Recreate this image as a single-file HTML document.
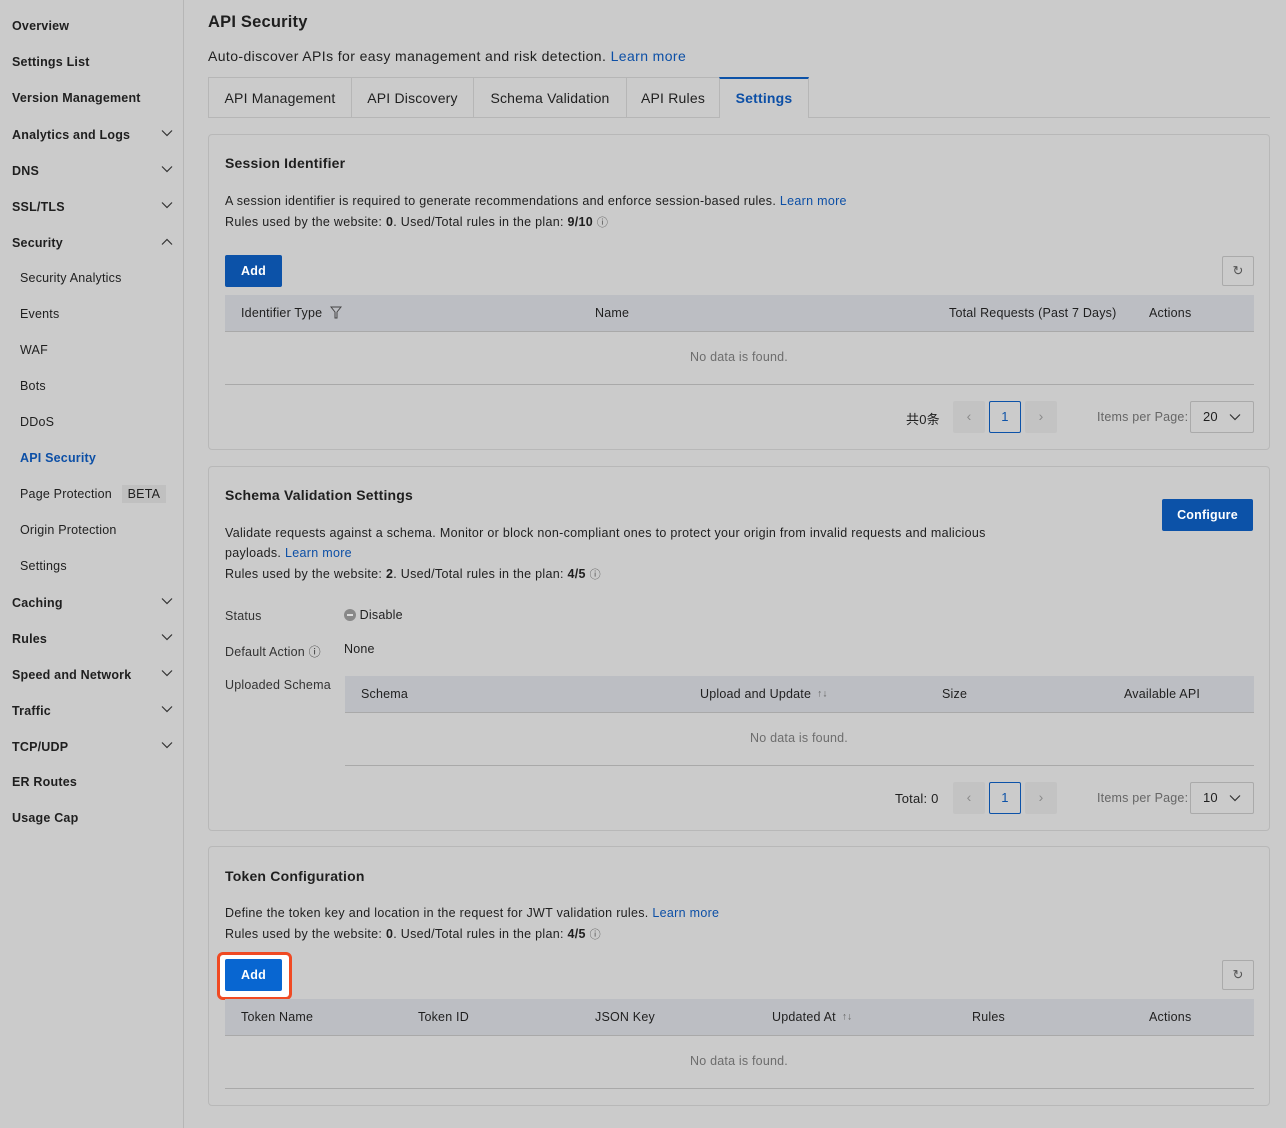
<!DOCTYPE html>
<html><head><meta charset="utf-8"><style>
*{box-sizing:border-box;margin:0;padding:0}
body{width:1286px;height:1128px;background:#cbcbcb;font-family:"Liberation Sans","Noto Sans CJK SC",sans-serif;color:#1f1f1f;position:relative;overflow:hidden;font-size:12.5px;letter-spacing:0.2px}
.a{position:absolute;white-space:nowrap}
.side{position:absolute;left:0;top:0;width:184px;height:1128px;border-right:1px solid #b6b6b6}
.nb{position:absolute;left:12px;font-weight:bold;font-size:12.5px;transform:translateY(-50%);margin-top:1px}
.ns{position:absolute;left:20px;font-size:12.5px;transform:translateY(-50%);margin-top:1px}
.chev{position:absolute;left:161px;width:12px;height:8px;transform:translateY(-50%)}
.card{position:absolute;left:208px;width:1062px;border:1px solid #b8b8b8;border-radius:4px}
.h{font-weight:bold;font-size:14px}
.lk{color:#0c4fa6}
.btn{position:absolute;background:#0c52a8;color:#fff;font-weight:bold;font-size:12.5px;border-radius:2px;text-align:center}
.th{position:absolute;left:225px;width:1029px;height:37px;background:#bcbec3;border-bottom:1px solid #a9a9a9}
.th span{position:absolute;top:50%;transform:translateY(-50%);font-size:12.5px;white-space:nowrap}
.line{position:absolute;height:1px;background:#a9a9a9}
.nod{position:absolute;color:#6d6d6d;font-size:12.5px;transform:translate(-50%,-50%)}
.pg{position:absolute;width:32px;height:32px;background:#c3c3c3;border-radius:2px;color:#8a8a8a;text-align:center;line-height:30px;font-size:14px}
.pa{position:absolute;width:32px;height:32px;border:1.5px solid #0c52a8;color:#0c52a8;border-radius:2px;text-align:center;line-height:29px;font-size:13px}
.sel{position:absolute;width:64px;height:32px;border:1px solid #aaa;border-radius:2px;font-size:13px;line-height:30px;padding-left:12px}
.ref{position:absolute;width:32px;height:30px;border:1px solid #aaa;border-radius:2px;text-align:center;line-height:28px;color:#555;font-size:13px}
.tab{position:absolute;top:77px;height:41px;border:1px solid #b6b6b6;font-size:14px;text-align:center;line-height:40px}
</style></head><body>
<div class="side">
<div class="nb" style="top:25px">Overview</div>
<div class="nb" style="top:61px">Settings List</div>
<div class="nb" style="top:97px">Version Management</div>
<div class="nb" style="top:134px">Analytics and Logs</div>
<div class="nb" style="top:170px">DNS</div>
<div class="nb" style="top:206px">SSL/TLS</div>
<div class="nb" style="top:242px">Security</div>
<div class="ns" style="top:277px">Security Analytics</div>
<div class="ns" style="top:313px">Events</div>
<div class="ns" style="top:349px">WAF</div>
<div class="ns" style="top:385px">Bots</div>
<div class="ns" style="top:421px">DDoS</div>
<div class="ns lk" style="top:457px;font-weight:bold">API Security</div>
<div class="ns" style="top:493px">Page Protection <span style="background:#c0c0c0;padding:2px 6px;margin-left:6px">BETA</span></div>
<div class="ns" style="top:529px">Origin Protection</div>
<div class="ns" style="top:565px">Settings</div>
<div class="nb" style="top:602px">Caching</div>
<div class="nb" style="top:638px">Rules</div>
<div class="nb" style="top:674px">Speed and Network</div>
<div class="nb" style="top:710px">Traffic</div>
<div class="nb" style="top:746px">TCP/UDP</div>
<div class="nb" style="top:781px">ER Routes</div>
<div class="nb" style="top:817px">Usage Cap</div>
<svg class="chev" style="top:133px" viewBox="0 0 12 8"><path d="M1 1.5l5 5 5-5" fill="none" stroke="#333" stroke-width="1.2"/></svg>
<svg class="chev" style="top:169px" viewBox="0 0 12 8"><path d="M1 1.5l5 5 5-5" fill="none" stroke="#333" stroke-width="1.2"/></svg>
<svg class="chev" style="top:205px" viewBox="0 0 12 8"><path d="M1 1.5l5 5 5-5" fill="none" stroke="#333" stroke-width="1.2"/></svg>
<svg class="chev" style="top:242px" viewBox="0 0 12 8"><path d="M1 6.5l5-5 5 5" fill="none" stroke="#333" stroke-width="1.2"/></svg>
<svg class="chev" style="top:601px" viewBox="0 0 12 8"><path d="M1 1.5l5 5 5-5" fill="none" stroke="#333" stroke-width="1.2"/></svg>
<svg class="chev" style="top:637px" viewBox="0 0 12 8"><path d="M1 1.5l5 5 5-5" fill="none" stroke="#333" stroke-width="1.2"/></svg>
<svg class="chev" style="top:673px" viewBox="0 0 12 8"><path d="M1 1.5l5 5 5-5" fill="none" stroke="#333" stroke-width="1.2"/></svg>
<svg class="chev" style="top:709px" viewBox="0 0 12 8"><path d="M1 1.5l5 5 5-5" fill="none" stroke="#333" stroke-width="1.2"/></svg>
<svg class="chev" style="top:745px" viewBox="0 0 12 8"><path d="M1 1.5l5 5 5-5" fill="none" stroke="#333" stroke-width="1.2"/></svg>
</div>

<div class="a" style="left:208px;top:13px;font-size:16.5px;font-weight:bold">API Security</div>
<div class="a" style="left:208px;top:48px;font-size:14px;letter-spacing:0.4px">Auto-discover APIs for easy management and risk detection. <span class="lk">Learn more</span></div>
<div class="a" style="left:808px;top:117px;width:462px;height:1px;background:#b6b6b6"></div>
<div class="tab" style="left:208px;width:144px">API Management</div>
<div class="tab" style="left:351px;width:123px">API Discovery</div>
<div class="tab" style="left:473px;width:154px">Schema Validation</div>
<div class="tab" style="left:626px;width:94px">API Rules</div>
<div class="tab lk" style="left:719px;width:90px;border-top:2px solid #0c52a8;border-bottom:none;font-weight:bold;line-height:38px">Settings</div>

<!-- card 1 -->
<div class="card" style="top:134px;height:316px"></div>
<div class="a h" style="left:225px;top:155px">Session Identifier</div>
<div class="a" style="left:225px;top:194px;letter-spacing:0.3px">A session identifier is required to generate recommendations and enforce session-based rules. <span class="lk">Learn more</span></div>
<div class="a" style="left:225px;top:214px;letter-spacing:0.3px">Rules used by the website: <b>0</b>. Used/Total rules in the plan: <b>9/10</b> <span style="font-size:11px;color:#555">ⓘ</span></div>
<div class="btn" style="left:225px;top:255px;width:57px;height:32px;line-height:32px">Add</div>
<div class="ref" style="left:1222px;top:256px">↻</div>
<div class="th" style="top:295px"><span style="left:16px">Identifier Type <svg width="12" height="13" viewBox="0 0 12 13" style="vertical-align:-2px;margin-left:4px"><path d="M1 1h10L7 6v6H5V6z" fill="none" stroke="#444"/></svg></span><span style="left:370px">Name</span><span style="left:724px">Total Requests (Past 7 Days)</span><span style="left:924px">Actions</span></div>
<div class="nod" style="left:739px;top:357px">No data is found.</div>
<div class="line" style="left:225px;top:384px;width:1029px"></div>
<div class="a" style="left:906px;top:409px;font-size:13px">共0条</div>
<div class="pg" style="left:953px;top:401px">‹</div>
<div class="pa" style="left:989px;top:401px">1</div>
<div class="pg" style="left:1025px;top:401px">›</div>
<div class="a" style="left:1097px;top:410px;color:#666">Items per Page:</div>
<div class="sel" style="left:1190px;top:401px">20<svg style="position:absolute;right:12px;top:11px" width="12" height="8" viewBox="0 0 12 8"><path d="M1 1.5l5 5 5-5" fill="none" stroke="#333" stroke-width="1.2"/></svg></div>

<!-- card 2 -->
<div class="card" style="top:466px;height:365px"></div>
<div class="a h" style="left:225px;top:487px">Schema Validation Settings</div>
<div class="btn" style="left:1162px;top:499px;width:91px;height:32px;line-height:32px">Configure</div>
<div class="a" style="left:225px;top:526px;letter-spacing:0.3px">Validate requests against a schema. Monitor or block non-compliant ones to protect your origin from invalid requests and malicious</div>
<div class="a" style="left:225px;top:546px;letter-spacing:0.3px">payloads. <span class="lk">Learn more</span></div>
<div class="a" style="left:225px;top:566px;letter-spacing:0.3px">Rules used by the website: <b>2</b>. Used/Total rules in the plan: <b>4/5</b> <span style="font-size:11px;color:#555">ⓘ</span></div>
<div class="a" style="left:225px;top:609px;color:#333">Status</div>
<div class="a" style="left:344px;top:608px"><span style="display:inline-block;width:12px;height:12px;border-radius:50%;background:#888;vertical-align:-2px;position:relative"><span style="position:absolute;left:3px;top:5px;width:6px;height:2px;background:#ddd"></span></span> Disable</div>
<div class="a" style="left:225px;top:643px;color:#333">Default Action <span style="font-size:12px">ⓘ</span></div>
<div class="a" style="left:344px;top:642px">None</div>
<div class="a" style="left:225px;top:678px;color:#333">Uploaded Schema</div>
<div class="th" style="left:345px;width:909px;top:676px"><span style="left:16px">Schema</span><span style="left:355px">Upload and Update <span style="font-size:10px;color:#666;margin-left:6px">↑↓</span></span><span style="left:597px">Size</span><span style="left:779px">Available API</span></div>
<div class="nod" style="left:799px;top:738px">No data is found.</div>
<div class="line" style="left:345px;top:765px;width:909px"></div>
<div class="a" style="left:895px;top:791px;font-size:13px">Total: 0</div>
<div class="pg" style="left:953px;top:782px">‹</div>
<div class="pa" style="left:989px;top:782px">1</div>
<div class="pg" style="left:1025px;top:782px">›</div>
<div class="a" style="left:1097px;top:791px;color:#666">Items per Page:</div>
<div class="sel" style="left:1190px;top:782px">10<svg style="position:absolute;right:12px;top:11px" width="12" height="8" viewBox="0 0 12 8"><path d="M1 1.5l5 5 5-5" fill="none" stroke="#333" stroke-width="1.2"/></svg></div>

<!-- card 3 -->
<div class="card" style="top:846px;height:260px"></div>
<div class="a h" style="left:225px;top:868px">Token Configuration</div>
<div class="a" style="left:225px;top:906px;letter-spacing:0.3px">Define the token key and location in the request for JWT validation rules. <span class="lk">Learn more</span></div>
<div class="a" style="left:225px;top:926px;letter-spacing:0.3px">Rules used by the website: <b>0</b>. Used/Total rules in the plan: <b>4/5</b> <span style="font-size:11px;color:#555">ⓘ</span></div>
<div class="a" style="left:217px;top:952px;width:75px;height:48px;border:3px solid #f04a23;border-radius:6px;background:#fff"></div>
<div class="btn" style="left:225px;top:959px;width:57px;height:32px;line-height:32px;background:#0866d1">Add</div>
<div class="ref" style="left:1222px;top:960px">↻</div>
<div class="th" style="top:999px"><span style="left:16px">Token Name</span><span style="left:193px">Token ID</span><span style="left:370px">JSON Key</span><span style="left:547px">Updated At <span style="font-size:10px;color:#666;margin-left:6px">↑↓</span></span><span style="left:747px">Rules</span><span style="left:924px">Actions</span></div>
<div class="nod" style="left:739px;top:1061px">No data is found.</div>
<div class="line" style="left:225px;top:1088px;width:1029px"></div>
</body></html>
